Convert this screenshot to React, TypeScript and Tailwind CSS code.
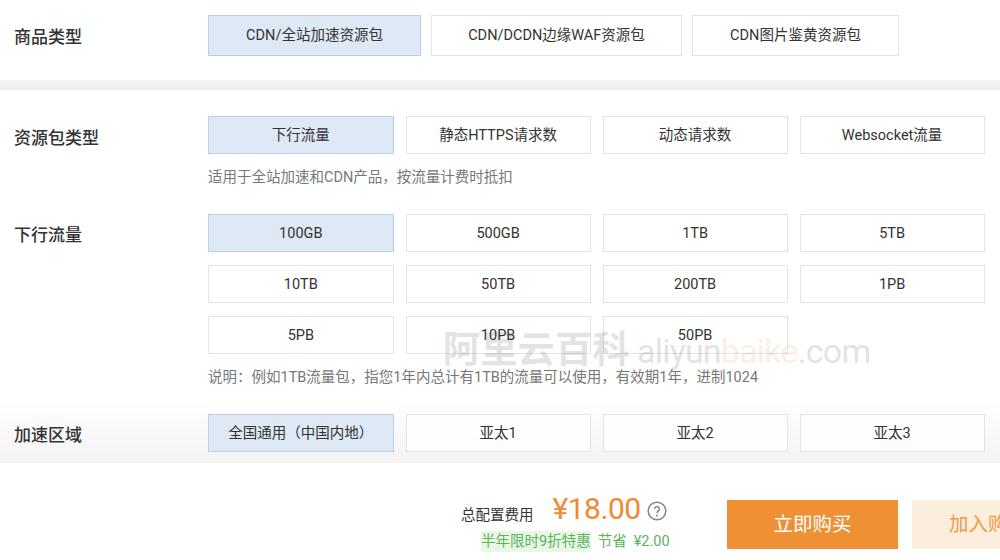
const productTypes = [
  { label: 'CDN/全站加速资源包', width: 'w-[213px]', active: true },
  { label: 'CDN/DCDN边缘WAF资源包', width: 'w-[251px]', active: false },
  { label: 'CDN图片鉴黄资源包', width: 'w-[207px]', active: false },
];

const packTypes = ['下行流量', '静态HTTPS请求数', '动态请求数', 'Websocket流量'];
const traffic = ['100GB', '500GB', '1TB', '5TB', '10TB', '50TB', '200TB', '1PB', '5PB', '10PB', '50PB'];
const regions = ['全国通用（中国内地）', '亚太1', '亚太2', '亚太3'];

function Option({ label, active, className = '' }: { label: string; active?: boolean; className?: string }) {
  return (
    <div
      className={`flex items-center justify-center border pt-[1px] text-[14.5px] text-[#333] ${
        active ? 'border-[#b9d0e8] bg-[#dfe8f5]' : 'border-[#e3e3e3] bg-white/80'
      } ${className}`}
    >
      {label}
    </div>
  );
}

function OptionGrid({ items, first }: { items: string[]; first: string }) {
  return (
    <div className="grid w-[777px] grid-cols-[185.6px_185px_185px_185px] gap-x-[12px] gap-y-[13px]">
      {items.map((item) => (
        <Option key={item} label={item} active={item === first} className="h-[38px]" />
      ))}
    </div>
  );
}

function Label({ children, className = 'pt-[2px]' }: { children: string; className?: string }) {
  return (
    <div className={`w-[208px] shrink-0 pl-[14px] text-[17px] font-medium leading-[38px] text-[#333] ${className}`}>
      {children}
    </div>
  );
}

export default function App() {
  return (
    <div className="relative flex h-[560px] w-[1000px] flex-col overflow-hidden bg-white font-['Roboto','Noto_Sans_CJK_SC',sans-serif]">
      <section className="flex h-[80px] shrink-0 pt-[15px]">
        <div className="w-[208px] shrink-0 pl-[14px] pt-[1px] text-[17px] font-medium leading-[42px] text-[#333]">商品类型</div>
        <div className="flex gap-[10px]">
          {productTypes.map((p) => (
            <Option key={p.label} label={p.label} active={p.active} className={`h-[41px] ${p.width}`} />
          ))}
        </div>
      </section>

      <div className="h-[10px] shrink-0 bg-gradient-to-b from-[#f4f4f4] to-[#ececec]" />

      <section className="h-[373px] shrink-0 bg-gradient-to-b from-white from-[83%] to-[#f3f3f3] pt-[26px]">
        <div className="flex">
          <Label className="pt-[3px]">资源包类型</Label>
          <div>
            <OptionGrid items={packTypes} first="下行流量" />
            <p className="mt-[14px] text-[14.5px] leading-[20px] text-[#777]">适用于全站加速和CDN产品，按流量计费时抵扣</p>
          </div>
        </div>

        <div className="mt-[26px] flex">
          <Label>下行流量</Label>
          <div>
            <OptionGrid items={traffic} first="100GB" />
            <p className="mt-[14px] text-[14.5px] leading-[20px] text-[#777]">
              说明：例如1TB流量包，指您1年内总计有1TB的流量可以使用，有效期1年，进制1024
            </p>
          </div>
        </div>

        <div className="mt-[26px] flex">
          <Label>加速区域</Label>
          <OptionGrid items={regions} first="全国通用（中国内地）" />
        </div>
      </section>

      <footer className="flex flex-1 pl-[461px] pt-[27px]">
        <div className="w-[266px] shrink-0">
          <div className="flex h-[38px] items-center">
            <span className="mt-[14px] text-[14.5px] text-[#333]">总配置费用</span>
            <span className="ml-[19px] text-[30px] leading-[38px] tracking-[-0.5px] text-[#ee8a33]">¥18.00</span>
            <svg viewBox="0 0 20 20" className="ml-[6px] mt-[3px] h-[20px] w-[20px]" fill="none">
              <circle cx="10" cy="10" r="8.8" stroke="#8a8485" strokeWidth="1.5" />
              <path d="M7.6 8a2.4 2.4 0 1 1 3.7 2c-.9.6-1.3 1-1.3 2.1" stroke="#8a8485" strokeWidth="1.5" fill="none" />
              <circle cx="10" cy="14.6" r="1" fill="#8a8485" />
            </svg>
          </div>
          <div className="ml-[20px] mt-[3px] flex items-center text-[14.5px] leading-[21px] text-[#5cb35c]">
            <span className="bg-[#e9f7e6]">半年限时9折特惠</span>
            <span className="ml-[7px]">节省</span>
            <span className="ml-[7px]">¥2.00</span>
          </div>
        </div>
        <div className="mt-[10px] flex h-[49px] w-[171px] shrink-0 items-center justify-center bg-[#f09035] text-[19.5px] text-white">立即购买</div>
        <div className="ml-[14px] mt-[10px] h-[49px] w-[171px] shrink-0 overflow-hidden whitespace-nowrap bg-[#fbeedd] pl-[37px] text-[19.5px] leading-[49px] text-[#ef9a4a]">加入购物车</div>
      </footer>

      <div className="pointer-events-none absolute left-[443px] top-[326px] flex items-baseline whitespace-nowrap opacity-[0.13]">
        <span className="text-[37px] font-bold leading-[50px] tracking-[0.4px] text-[#333]">阿里云百科</span>
        <span className="ml-[7px] text-[34px] leading-[50px] tracking-[-0.8px] text-[#333]">aliyun</span>
        <span className="text-[34px] leading-[50px] tracking-[-0.8px] text-[#e8864a]">baike</span>
        <span className="text-[34px] leading-[50px] tracking-[-0.8px] text-[#333]">.com</span>
      </div>
    </div>
  );
}
